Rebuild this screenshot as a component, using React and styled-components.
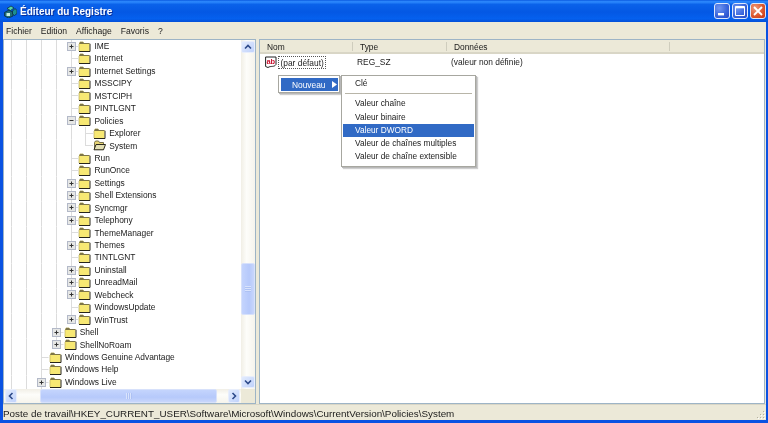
import React from "react";
import styled, { createGlobalStyle, css } from "styled-components";

const Global = createGlobalStyle`
  html, body { margin: 0; padding: 0; width: 768px; height: 423px; overflow: hidden; background: #0a52e2; }
  * { box-sizing: border-box; }
`;

const Win = styled.div`
  width: 768px; height: 423px; display: flex; flex-direction: column;
  background: #0a52e2; font-family: "Liberation Sans", Arial, sans-serif; font-size: 8.4px; color: #1a1a1a;
  overflow: hidden; filter: blur(0.3px);
`;
const TitleBar = styled.header`
  height: 22px; flex: none; display: flex; align-items: center; padding: 0 2px 0 4px;
  background: linear-gradient(180deg, #0a5ae0 0%, #2f8cff 8%, #0a62ea 20%, #0458e4 55%, #0560ee 85%, #0450d8 100%);
`;
const TitleIcon = styled.svg` width: 13px; height: 13px; flex: none; margin-right: 3px; `;
const TitleText = styled.h1`
  margin: 0; flex: 1; color: #fff; font: bold 10px "Liberation Sans", sans-serif; text-shadow: 1px 1px 0 #0a2f9a;
`;
const WinBtn = styled.button`
  width: 16px; height: 16px; padding: 0; margin-left: 2px; display: flex; align-items: center; justify-content: center;
  border: 1px solid #dfe8fb; border-radius: 3px;
  background: ${(p) => (p.$close
    ? "radial-gradient(circle at 30% 30%, #ee9a7c, #dd5a30 55%, #c53412)"
    : "radial-gradient(circle at 30% 30%, #7196f0, #3a66dc 55%, #2447c4)")};
  svg { width: 12px; height: 12px; display: block; }
`;
const Body = styled.div`
  flex: 1; min-height: 0; margin: 0 2px 3px 3px; display: flex; flex-direction: column; background: #ece9d8;
`;
const MenuBar = styled.nav`
  height: 17px; flex: none; display: flex; align-items: center; gap: 9px; padding-left: 3px; font-size: 8.6px;
`;
const Panes = styled.div` flex: none; height: 365px; display: flex; gap: 3px; padding-right: 1px; `;
const TreePane = styled.section`
  width: 253px; flex: none; display: grid; grid-template-columns: 1fr 14px; grid-template-rows: 1fr 14px;
  border: 1px solid #9db4c6; background: #fff; min-height: 0;
`;
const TreeView = styled.div` overflow: hidden; padding: 0 0 0 0.5px; `;
const RowEl = styled.div`
  height: 12.45px; display: flex; align-items: stretch; white-space: nowrap;
`;
const Guide = styled.span`
  width: 14.8px; flex: none;
  background: linear-gradient(#dcdcdc, #dcdcdc) center / 1px 100% no-repeat;
`;
const Connector = styled.span`
  width: 14.8px; flex: none; display: flex; align-items: center; justify-content: center;
  background:
    linear-gradient(#dcdcdc, #dcdcdc) right center / 50% 1px no-repeat,
    linear-gradient(#dcdcdc, #dcdcdc) center top / 1px ${(p) => (p.$last ? "50%" : "100%")} no-repeat;
`;
const Expander = styled.svg` width: 9px; height: 9px; display: block; `;
const FolderSvg = styled.svg` width: 13px; height: 11px; flex: none; align-self: center; `;
const Label = styled.span` padding-left: 3px; line-height: 12.45px; `;

const ScrollTrack = styled.div`
  background: ${(p) => (p.$h
    ? "linear-gradient(180deg,#f1efe6,#fdfdfa 40%,#f6f4ec)"
    : "linear-gradient(90deg,#f1efe6,#fdfdfa 40%,#f6f4ec)")};
  display: flex; flex-direction: ${(p) => (p.$h ? "row" : "column")}; align-items: stretch;
  justify-content: space-between; padding: ${(p) => (p.$h ? "0 1px 0 1px" : "1px 0")};
`;
const ArrowBtn = styled.div`
  flex: none; ${(p) => (p.$h ? "width: 12px;" : "height: 12px;")}
  border-radius: 2px; background: linear-gradient(135deg,#e2ebfd,#c0d2fb); border: 1px solid #e8eefc;
  display: flex; align-items: center; justify-content: center;
  svg { width: 8px; height: 8px; display: block; }
`;
const VMiddle = styled.div` flex: 1; display: flex; flex-direction: column; padding-top: 210px; `;
const VThumb = styled.div`
  height: 52px; border-radius: 2px; background: linear-gradient(90deg,#c4d4fd,#b6c9fb 60%,#c8d6fb);
  border: 1px solid #d7e1fb; display: flex; align-items: center; justify-content: center;
`;
const HMiddle = styled.div` flex: 1; display: flex; padding-left: 23px; padding-right: 11px; `;
const HThumb = styled.div`
  flex: 1; border-radius: 2px; background: linear-gradient(180deg,#c4d4fd,#b6c9fb 60%,#c8d6fb);
  border: 1px solid #d7e1fb; display: flex; align-items: center; justify-content: center;
`;
const Grip = styled.span`
  width: 6px; height: 6px; opacity: .7;
  background: repeating-linear-gradient(${(p) => (p.$h ? "90deg" : "180deg")}, #e6edfd 0 1px, #a8bdf0 1px 2px);
`;
const Corner = styled.div` background: #ece9d8; `;

const ListPane = styled.section`
  flex: 1; min-width: 0; display: flex; flex-direction: column; position: relative; background: #fff;
  border: 1px solid #9db4c6;
`;
const ListHead = styled.div`
  height: 14px; flex: none; display: flex; background: #ece9d8; border-bottom: 2px solid #d9d6c6;
`;
const HeadCell = styled.div`
  width: ${(p) => p.$w}px; flex: none; padding-left: ${(p) => p.$pad ?? 4}px; line-height: 14px;
  ${(p) => !p.$end && css`background: linear-gradient(#cfcdbd,#cfcdbd) right 2px / 1px 9px no-repeat;`}
`;
const ListRow = styled.div`
  height: 13px; margin-top: 1.5px; display: flex; align-items: center; white-space: nowrap; padding-left: 5px;
`;
const NameCell = styled.div` width: 92px; flex: none; display: flex; align-items: center; `;
const AbIcon = styled.svg` width: 12px; height: 13px; flex: none; `;
const Focus = styled.span`
  margin-left: 1px; padding: 0 1.5px; border: 1px dotted #555; line-height: 12px; height: 13px;
`;
const TypeCell = styled.div` width: 94px; flex: none; `;

const PopMenu = styled.div`
  position: absolute; background: #fff; border: 1px solid #a7a7a0; padding: 2px 1px 1px 2px;
  box-shadow: 1px 1px 0 #b8b8b8, 2px 2px 1px #cfcfcf;
`;
const ParentMenu = styled(PopMenu)` left: 18px; top: 35px; width: 62px; height: 18px; `;
const SubMenu = styled(PopMenu)` left: 81px; top: 35px; width: 135px; height: 92px; padding: 1px; `;
const ParentItem = styled.div`
  height: 13px; background: #316ac5; color: #fff; display: flex; align-items: center; justify-content: space-between;
  padding: 0 1px 0 11px;
`;
const MenuItem = styled.div`
  height: 13.3px; line-height: 13.3px; padding-left: 12px; white-space: nowrap; font-size: 8.3px;
  ${(p) => p.$on && css`background: #316ac5; color: #fff;`}
`;
const Sep = styled.hr` border: 0; height: 1px; background: #b8b5a8; margin: 3px 2px 3px; `;
const Status = styled.footer`
  flex: 1; min-height: 0; display: flex; align-items: center; justify-content: space-between; padding: 1px 0 0 0;
  font-size: 9.85px; white-space: nowrap; overflow: hidden; border-top: 1px solid #d9d6c6;
`;
const SizeGrip = styled.svg` width: 10px; height: 10px; align-self: flex-end; flex: none; `;

const Folder = ({ open }) => (
  <FolderSvg viewBox="0 0 13 11">
    {open ? (
      <>
        <path d="M1.5 2.5 L2.5 1 H5.5 L6.5 2.5 H10.5 V9.5 H1.5 Z" fill="#e8d574" stroke="#6a6340" strokeWidth=".9" />
        <path d="M3 4.5 H12.5 L10.5 9.8 H1 Z" fill="#e4e0b4" stroke="#2b281c" strokeWidth="1" />
      </>
    ) : (
      <>
        <path d="M1 2.5 L2 .8 H5 L6 2 H11.5 V10 H1 Z" fill="#f7e873" />
        <path d="M2 .8 H5 L6 2 H11.5 V3 H1 Z" fill="#7d7548" />
        <path d="M1 3 V10" stroke="#b9ac62" strokeWidth=".7" />
        <path d="M12 2.8 V10.5 H1" fill="none" stroke="#26241a" strokeWidth="1" />
      </>
    )}
  </FolderSvg>
);

const Exp = ({ minus }) => (
  <Expander viewBox="0 0 9 9">
    <rect x=".5" y=".5" width="8" height="8" fill="#e6e7e6" stroke="#b3b9c8" />
    <path d="M2.5 4.5 H6.5" stroke="#333" />
    {!minus && <path d="M4.5 2.5 V6.5" stroke="#333" />}
  </Expander>
);

// [label, level, expander: '+', '-', or none, openFolder, lastSibling]
const rows = [
  ["IME", 5, "+"], ["Internet", 5], ["Internet Settings", 5, "+"], ["MSSCIPY", 5], ["MSTCIPH", 5], ["PINTLGNT", 5],
  ["Policies", 5, "-"], ["Explorer", 6], ["System", 6, null, true, true], ["Run", 5], ["RunOnce", 5],
  ["Settings", 5, "+"], ["Shell Extensions", 5, "+"], ["Syncmgr", 5, "+"], ["Telephony", 5, "+"], ["ThemeManager", 5],
  ["Themes", 5, "+"], ["TINTLGNT", 5], ["Uninstall", 5, "+"], ["UnreadMail", 5, "+"], ["Webcheck", 5, "+"],
  ["WindowsUpdate", 5], ["WinTrust", 5, "+", false, true], ["Shell", 4, "+"], ["ShellNoRoam", 4, "+", false, true],
  ["Windows Genuine Advantage", 3], ["Windows Help", 3], ["Windows Live", 3, "+"], ["", 3],
];

const Row = ({ r }) => {
  const [label, level, exp, open, last] = r;
  return (
    <RowEl>
      {Array.from({ length: level - 1 }, (_, i) => <Guide key={i} />)}
      <Connector $last={last}>{exp && <Exp minus={exp === "-"} />}</Connector>
      <Folder open={open} />
      <Label>{label}</Label>
    </RowEl>
  );
};

const Arrow = ({ d }) => (
  <svg viewBox="0 0 8 8"><path d={d} fill="none" stroke="#2d4a8a" strokeWidth="1.6" /></svg>
);

export default function App() {
  return (
    <Win>
      <Global />
      <TitleBar>
        <TitleIcon viewBox="0 0 13 13">
          <path d="M.5 7.5 L5 5 L9 7.5 V11 L4.5 13 L.5 11 Z" fill="#1f6d76" stroke="#08263a" strokeWidth=".7" />
          <path d="M3 3.5 L7 1 L10 3 L6.5 5.5 Z" fill="#53d0a8" stroke="#08263a" strokeWidth=".7" />
          <path d="M8.5 6 L11 3.5 L13 5.5 V8.5 L10.5 10.5 L8.5 9 Z" fill="#1c8f90" stroke="#08263a" strokeWidth=".7" />
          <path d="M2.5 8 H6 V11 H2.5 Z" fill="#c8f0e0" />
        </TitleIcon>
        <TitleText>Éditeur du Registre</TitleText>
        <WinBtn aria-label="Réduire"><svg viewBox="0 0 12 12"><rect x="2" y="8" width="6" height="2.4" fill="#fff" /></svg></WinBtn>
        <WinBtn aria-label="Agrandir"><svg viewBox="0 0 12 12"><path d="M1.5 1.5 H10.5 V10.5 H1.5 Z" fill="none" stroke="#fff" /><path d="M1.5 2.5 H10.5" stroke="#fff" strokeWidth="1.6" /></svg></WinBtn>
        <WinBtn $close aria-label="Fermer"><svg viewBox="0 0 12 12"><path d="M2 2 L10 10 M10 2 L2 10" stroke="#fff" strokeWidth="1.8" /></svg></WinBtn>
      </TitleBar>
      <Body>
        <MenuBar>
          <span>Fichier</span><span>Edition</span><span>Affichage</span><span>Favoris</span><span>?</span>
        </MenuBar>
        <Panes>
          <TreePane>
            <TreeView>{rows.map((r, i) => <Row key={i} r={r} />)}</TreeView>
            <ScrollTrack>
              <ArrowBtn><Arrow d="M1 5.5 L4 2.5 L7 5.5" /></ArrowBtn>
              <VMiddle><VThumb><Grip /></VThumb></VMiddle>
              <ArrowBtn><Arrow d="M1 2.5 L4 5.5 L7 2.5" /></ArrowBtn>
            </ScrollTrack>
            <ScrollTrack $h>
              <ArrowBtn $h><Arrow d="M5.5 1 L2.5 4 L5.5 7" /></ArrowBtn>
              <HMiddle><HThumb><Grip $h /></HThumb></HMiddle>
              <ArrowBtn $h><Arrow d="M2.5 1 L5.5 4 L2.5 7" /></ArrowBtn>
            </ScrollTrack>
            <Corner />
          </TreePane>
          <ListPane>
            <ListHead>
              <HeadCell $w={93} $pad={7}>Nom</HeadCell>
              <HeadCell $w={94} $pad={7}>Type</HeadCell>
              <HeadCell $w={223} $pad={7}>Données</HeadCell>
              <HeadCell $end $w={90} />
            </ListHead>
            <ListRow>
              <NameCell>
                <AbIcon viewBox="0 0 12 13">
                  <path d="M.6 1 H11 V8.5 C9 11.5 6 9.5 3 11.5 L.6 10.5 Z" fill="#fff" stroke="#222" strokeWidth="1" />
                  <text x="1.4" y="7.6" fontFamily="Liberation Sans" fontWeight="700" fontSize="7.5" fill="#c8102e">ab</text>
                </AbIcon>
                <Focus>(par défaut)</Focus>
              </NameCell>
              <TypeCell>REG_SZ</TypeCell>
              <span>(valeur non définie)</span>
            </ListRow>
            <ParentMenu>
              <ParentItem>
                <span>Nouveau</span>
                <svg width="5" height="7" viewBox="0 0 5 7"><path d="M0 0 L5 3.5 L0 7 Z" fill="#fff" /></svg>
              </ParentItem>
            </ParentMenu>
            <SubMenu>
              <MenuItem>Clé</MenuItem>
              <Sep />
              <MenuItem>Valeur chaîne</MenuItem>
              <MenuItem>Valeur binaire</MenuItem>
              <MenuItem $on>Valeur DWORD</MenuItem>
              <MenuItem>Valeur de chaînes multiples</MenuItem>
              <MenuItem>Valeur de chaîne extensible</MenuItem>
            </SubMenu>
          </ListPane>
        </Panes>
        <Status>
          <span>Poste de travail\HKEY_CURRENT_USER\Software\Microsoft\Windows\CurrentVersion\Policies\System</span>
          <SizeGrip viewBox="0 0 10 10">
            <path d="M8 2h1v1H8zM5 5h1v1H5zM8 5h1v1H8zM2 8h1v1H2zM5 8h1v1H5zM8 8h1v1H8z" fill="#fff" />
            <path d="M7 1h1v1H7zM4 4h1v1H4zM7 4h1v1H7zM1 7h1v1H1zM4 7h1v1H4zM7 7h1v1H7z" fill="#b5b2a2" />
          </SizeGrip>
        </Status>
      </Body>
    </Win>
  );
}
